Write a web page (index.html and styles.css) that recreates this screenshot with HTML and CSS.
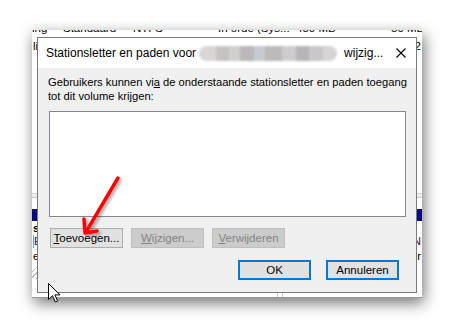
FILE: index.html
```html
<!DOCTYPE html>
<html>
<head>
<meta charset="utf-8">
<link rel="stylesheet" href="styles.css">
</head>
<body>
<div class="stage">
  <div class="bgwin">
    <div class="bgrow top">
      <span class="c1">ing</span><span class="c2">Standaard</span><span class="c3">NTFS</span><span class="c4">In orde (Sys...</span><span class="c5">450 MB</span><span class="c6">50 MB</span>
    </div>
    <div class="bgrow two"><span>li</span><span>02</span></div>
    <div class="bgspacer"></div>
    <div class="bgband gray"></div>
    <div class="bgspacer2"></div>
    <div class="bgband navy"></div>
    <div class="bgrow three"><span class="bold">s</span><span></span></div>
    <div class="bgrow four"><span class="eblue">E</span><span class="pur">N</span></div>
    <div class="bgrow five"><span>e</span><span>or</span></div>
    <div class="bgfoot"><span class="hatch"></span><span class="div d1"></span><span class="div d2"></span></div>
  </div>

  <div class="dialog">
    <div class="titlebar">
      <span class="title">Stationsletter en paden voor</span>
      <span class="blurred"></span>
      <span class="title">wijzig...</span>
      <svg class="close" width="10" height="10" viewBox="0 0 10 10"><path d="M0.5 0.5 L9.5 9.5 M9.5 0.5 L0.5 9.5" stroke="#000" stroke-width="1.1" fill="none"/></svg>
    </div>
    <div class="body">
      <p class="desc">Gebruikers kunnen vi<u>a</u> de onderstaande stationsletter en paden toegang<br>tot dit volume krijgen:</p>
      <div class="listbox"></div>
      <div class="btnrow">
        <button class="btn"><u>T</u>oevoegen...</button>
        <button class="btn disabled"><u>W</u>ijzigen...</button>
        <button class="btn disabled"><u>V</u>erwijderen</button>
      </div>
      <div class="okrow">
        <button class="btn default">OK</button>
        <button class="btn default">Annuleren</button>
      </div>
    </div>
  </div>

  <svg class="arrow" width="454" height="330" viewBox="0 0 454 330">
    <defs>
      <filter id="sh" x="-20%" y="-20%" width="140%" height="140%">
        <feDropShadow dx="2" dy="2" stdDeviation="1.5" flood-color="#000" flood-opacity="0.35"/>
      </filter>
    </defs>
    <g filter="url(#sh)" stroke="#f00" stroke-width="3.5" stroke-linecap="round" stroke-linejoin="round" fill="none">
      <path d="M118 178 L86 232"/>
      <path d="M84 219 L85 233 L97 231"/>
    </g>
  </svg>

  <svg class="cursor" width="14" height="21" viewBox="0 0 14 21">
    <path d="M0.5 0.5 L0.5 16.5 L4.5 12.7 L7.3 19 L9.6 18 L6.9 11.9 L12 11.9 Z" fill="#fff" stroke="#000" stroke-width="1"/>
  </svg>
</div>
</body>
</html>
```

FILE: styles.css
```css
* { box-sizing: border-box; }
html, body { margin: 0; padding: 0; background: #fff; }
body { font-family: "Liberation Sans", Arial, sans-serif; font-size: 11px; color: #000; }

.stage { position: relative; width: 454px; height: 330px; overflow: hidden; background: #fff; }

/* background window behind the dialog */
.bgwin {
  position: absolute; left: 32px; top: 30px; width: 390px; height: 268px;
  background: #fff; overflow: hidden;
  box-shadow: 2px 5px 14px rgba(0,0,0,0.55);
  display: flex; flex-direction: column;
}
.bgrow { flex: none; display: flex; justify-content: space-between; font-size: 11.5px; line-height: 12px; padding: 0 1px; white-space: nowrap; }
.bgrow.top { display: block; margin-top: -8px; height: 12px; position: relative; }
.bgrow.top span { position: absolute; top: 0; }
.c1 { left: 0; } .c2 { left: 31px; } .c3 { left: 101px; } .c4 { left: 186px; } .c5 { left: 264px; } .c6 { left: 359px; }
.bgrow.two { margin-top: 6px; height: 12px; }
.bgspacer { flex: none; height: 141px; }
.bgband { flex: none; }
.bgband.gray { height: 5px; border-top: 1px solid #d4d4d4; border-bottom: 1px solid #c8c8c8; background: #eee; }
.bgspacer2 { flex: none; height: 11px; }
.bgband.navy { height: 12px; background: #0a0a80; }
.bgrow.three { margin-top: 1px; height: 12px; }
.bold { font-weight: bold; }
.bgrow.four { margin-top: 1px; height: 13px; }
.eblue { border-left: 1px solid #4aa3ff; color: #302050; }
.pur { color: #5a1038; }
.bgrow.five { margin-top: 2px; height: 13px; }
.bgfoot { flex: 1; position: relative; border-bottom: 1px solid #999; }
.hatch { position: absolute; left: 0; top: 4px; width: 12px; height: 12px;
  background: repeating-linear-gradient(135deg, transparent 0 3px, #bbb 3px 4px); }
.div { position: absolute; top: 8px; bottom: 0; width: 1px; background: #c8c8c8; }
.d1 { left: 245px; } .d2 { left: 250px; }

/* dialog */
.dialog {
  position: absolute; left: 37px; top: 37px; width: 380px; height: 256px;
  border: 1px solid #7a7a7a; background: #f0f0f0;
  display: flex; flex-direction: column;
}
.titlebar {
  flex: none; height: 30px; background: #fff; display: flex; align-items: center;
  padding: 0 10px 0 8px; white-space: nowrap;
}
.title { font-size: 12px; }
.blurred {
  width: 138px; height: 15px; margin: 0 7px 0 3px; border-radius: 8px;
  background: linear-gradient(90deg, #dad6d6 0 12%, #c6c2c2 12% 22%, #d2cfcf 22% 30%, #b9b7b8 30% 40%, #c7cbd1 40% 48%, #bdbabb 48% 60%, #cfcccd 60% 70%, #b7b5b7 70% 80%, #c9c6c8 80% 90%, #d6d3d4 90% 100%);
  filter: blur(0.8px);
}
.close { margin-left: auto; }

.body { flex: 1; padding: 8px 17px 0 10px; display: flex; flex-direction: column; }
.desc { margin: 0; line-height: 13.5px; white-space: nowrap; font-size: 11.2px; }
.listbox { flex: none; margin: 8px 0 0 1px; height: 106px; width: 357px; background: #fff; border: 1px solid #828790; }
.btnrow { display: flex; gap: 8px; margin-top: 11px; padding-left: 2px; }
.okrow { display: flex; gap: 15px; margin-top: 12px; justify-content: flex-end; }
.btn {
  flex: none; width: 73px; height: 20px; padding: 0; margin: 0;
  font-family: inherit; font-size: 11.5px; color: #000;
  background: #e1e1e1; border: 1px solid #adadad; border-radius: 0;
}
.btn.disabled { background: #cccccc; border-color: #bfbfbf; color: #838383; }
.btn.default { border: 2px solid #0078d7; }

.arrow { position: absolute; left: 0; top: 0; pointer-events: none; }
.cursor { position: absolute; left: 48px; top: 283px; }
```
